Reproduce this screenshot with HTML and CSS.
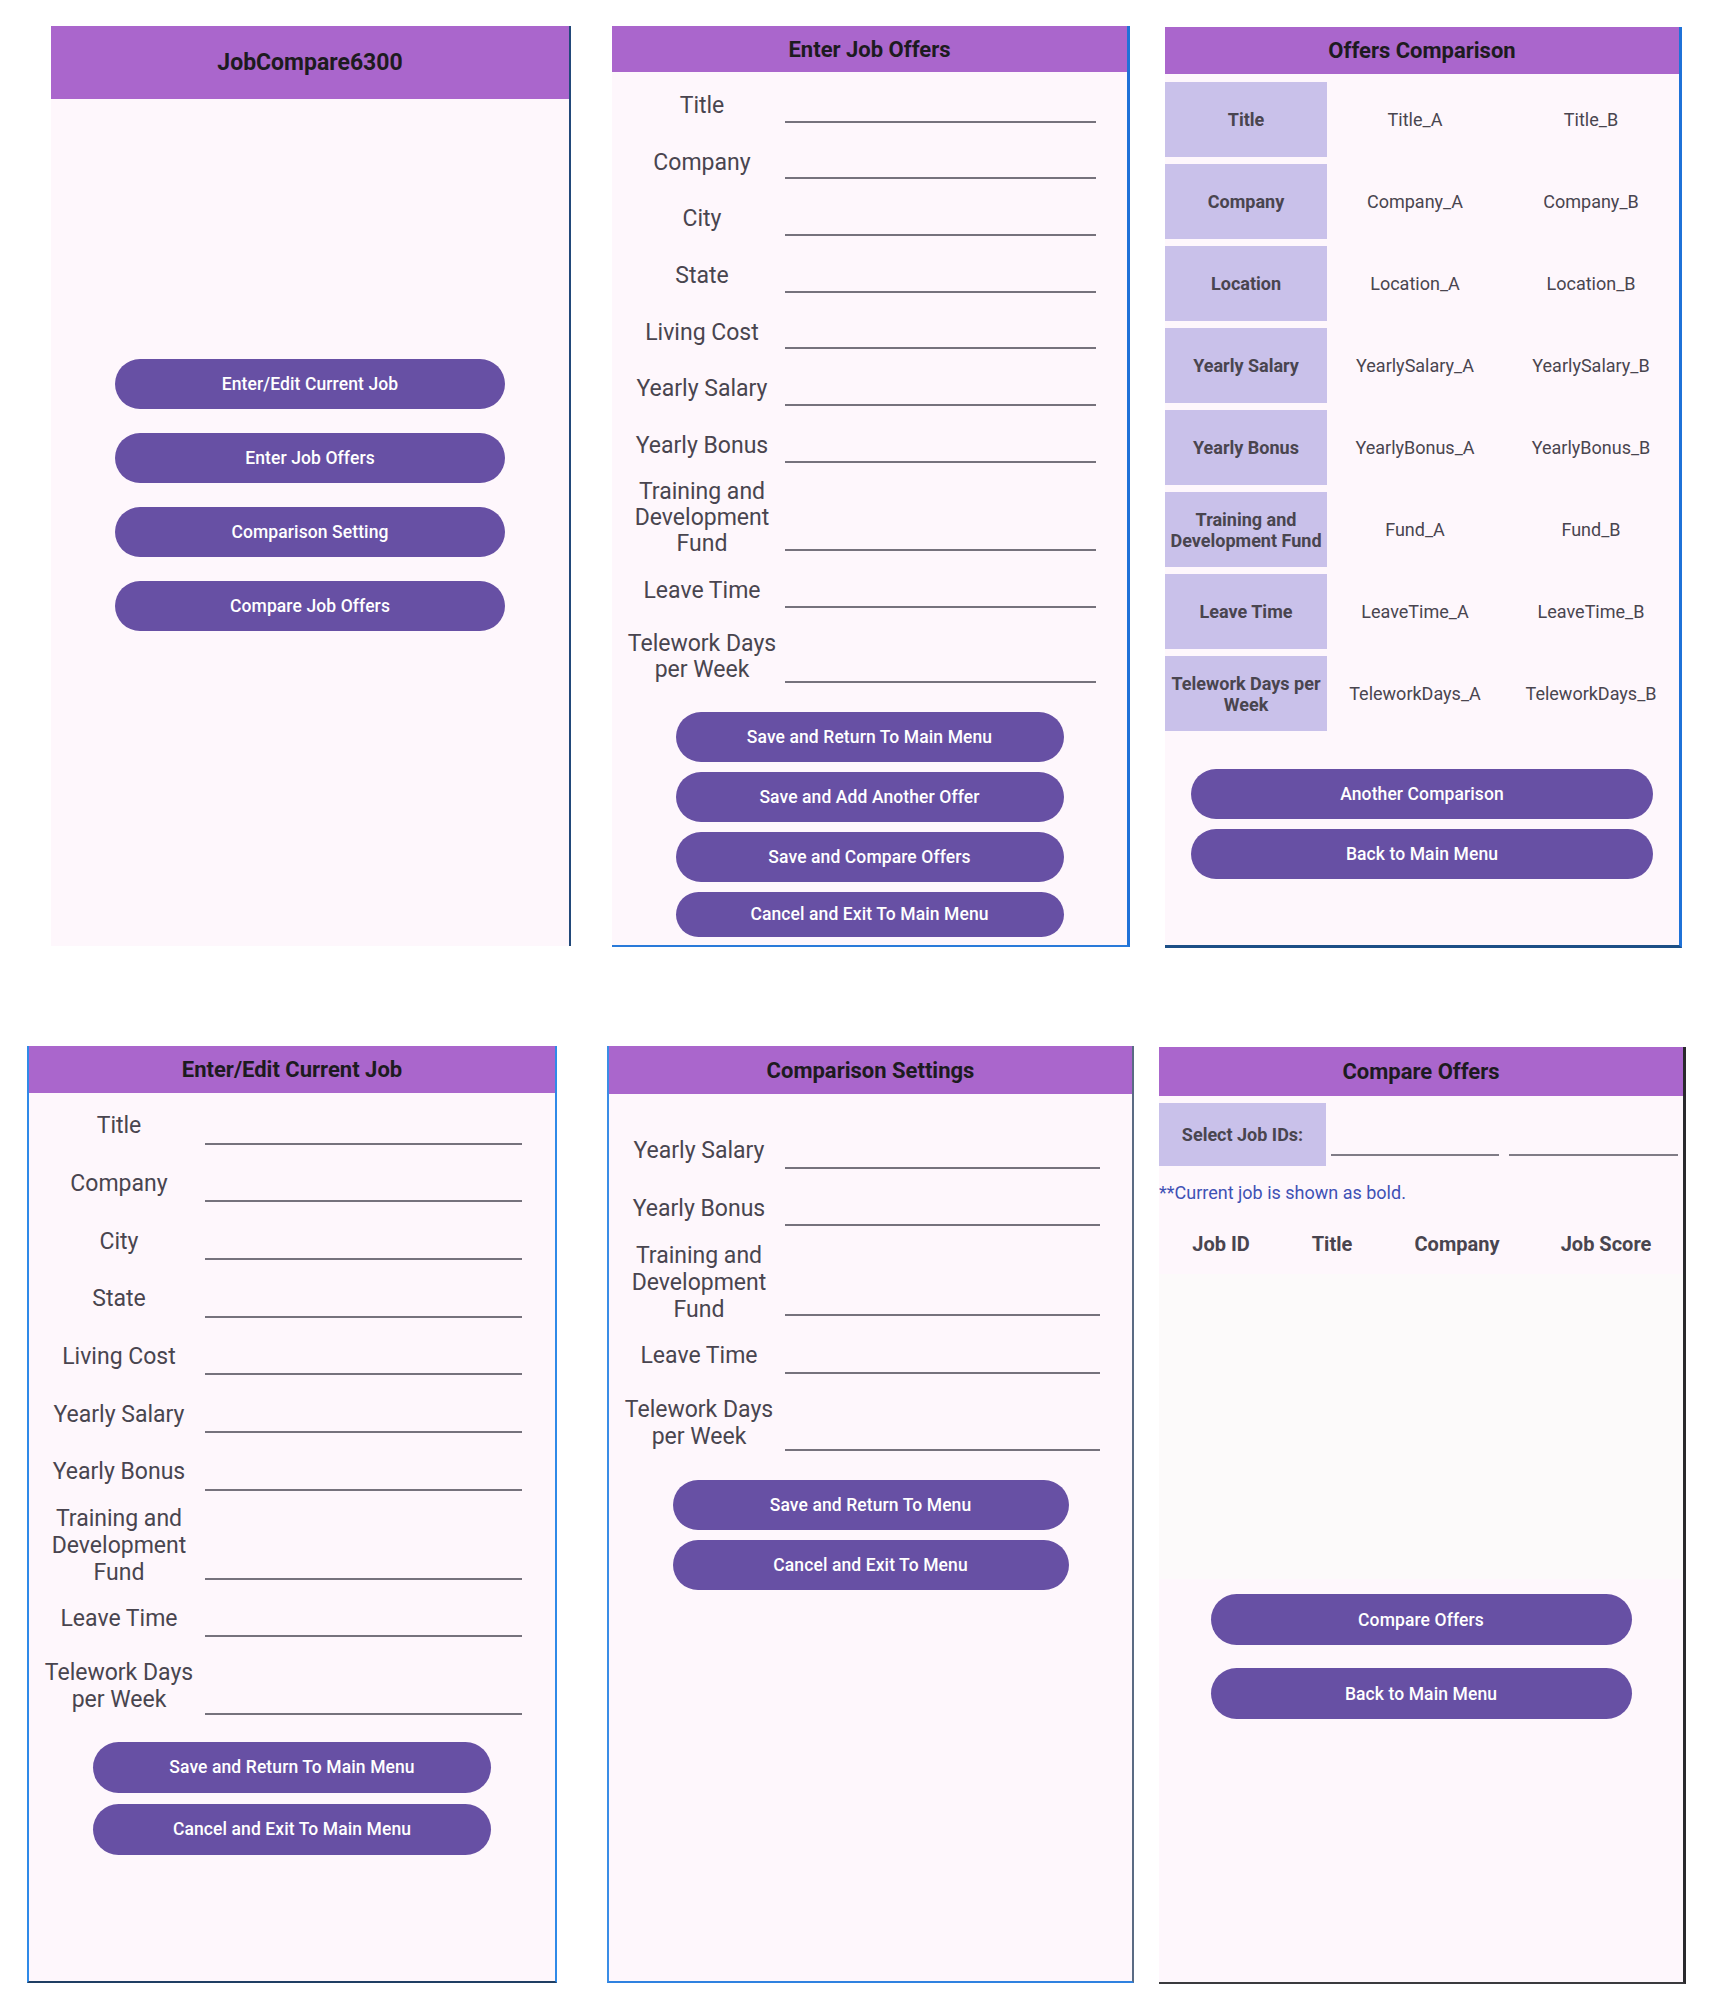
FILE: index.html
```html
<!DOCTYPE html>
<html lang="en">
<head>
<meta charset="utf-8">
<title>JobCompare6300 screens</title>
<link rel="stylesheet" href="styles.css">
</head>
<body>
<div class="page">
  <div class="row row-top">
    <!-- Main menu -->
    <section class="panel p1">
      <header class="bar bar-tall"><h1 class="bar-title big">JobCompare6300</h1></header>
      <div class="menu">
        <button class="btn btn-menu">Enter/Edit Current Job</button>
        <button class="btn btn-menu">Enter Job Offers</button>
        <button class="btn btn-menu">Comparison Setting</button>
        <button class="btn btn-menu">Compare Job Offers</button>
      </div>
    </section>

    <!-- Enter Job Offers -->
    <section class="panel p2">
      <header class="bar bar-46"><h1 class="bar-title">Enter Job Offers</h1></header>
      <div class="form form-p2">
        <div class="frow h57"><div class="flabel">Title</div><div class="ffield"></div></div>
        <div class="frow h57"><div class="flabel">Company</div><div class="ffield"></div></div>
        <div class="frow h57"><div class="flabel">City</div><div class="ffield"></div></div>
        <div class="frow h57"><div class="flabel">State</div><div class="ffield"></div></div>
        <div class="frow h57"><div class="flabel">Living Cost</div><div class="ffield"></div></div>
        <div class="frow h57"><div class="flabel">Yearly Salary</div><div class="ffield"></div></div>
        <div class="frow h57"><div class="flabel">Yearly Bonus</div><div class="ffield"></div></div>
        <div class="frow h88"><div class="flabel">Training and<br>Development<br>Fund</div><div class="ffield"></div></div>
        <div class="frow h57"><div class="flabel">Leave Time</div><div class="ffield"></div></div>
        <div class="frow h75"><div class="flabel">Telework Days<br>per Week</div><div class="ffield"></div></div>
      </div>
      <div class="actions actions-p2">
        <button class="btn">Save and Return To Main Menu</button>
        <button class="btn">Save and Add Another Offer</button>
        <button class="btn">Save and Compare Offers</button>
        <button class="btn btn-short">Cancel and Exit To Main Menu</button>
      </div>
    </section>

    <!-- Offers Comparison -->
    <section class="panel p3">
      <header class="bar bar-47"><h1 class="bar-title">Offers Comparison</h1></header>
      <div class="ctable">
        <div class="crow"><div class="chead">Title</div><div class="cval">Title_A</div><div class="cval">Title_B</div></div>
        <div class="crow"><div class="chead">Company</div><div class="cval">Company_A</div><div class="cval">Company_B</div></div>
        <div class="crow"><div class="chead">Location</div><div class="cval">Location_A</div><div class="cval">Location_B</div></div>
        <div class="crow"><div class="chead">Yearly Salary</div><div class="cval">YearlySalary_A</div><div class="cval">YearlySalary_B</div></div>
        <div class="crow"><div class="chead">Yearly Bonus</div><div class="cval">YearlyBonus_A</div><div class="cval">YearlyBonus_B</div></div>
        <div class="crow"><div class="chead">Training and<br>Development Fund</div><div class="cval">Fund_A</div><div class="cval">Fund_B</div></div>
        <div class="crow"><div class="chead">Leave Time</div><div class="cval">LeaveTime_A</div><div class="cval">LeaveTime_B</div></div>
        <div class="crow"><div class="chead">Telework Days per<br>Week</div><div class="cval">TeleworkDays_A</div><div class="cval">TeleworkDays_B</div></div>
      </div>
      <div class="actions actions-p3">
        <button class="btn">Another Comparison</button>
        <button class="btn">Back to Main Menu</button>
      </div>
    </section>
  </div>

  <div class="row row-bottom">
    <!-- Enter/Edit Current Job -->
    <section class="panel p4">
      <header class="bar bar-47"><h1 class="bar-title">Enter/Edit Current Job</h1></header>
      <div class="form form-p4">
        <div class="frow h58"><div class="flabel">Title</div><div class="ffield"></div></div>
        <div class="frow h58"><div class="flabel">Company</div><div class="ffield"></div></div>
        <div class="frow h58"><div class="flabel">City</div><div class="ffield"></div></div>
        <div class="frow h58"><div class="flabel">State</div><div class="ffield"></div></div>
        <div class="frow h58"><div class="flabel">Living Cost</div><div class="ffield"></div></div>
        <div class="frow h58"><div class="flabel">Yearly Salary</div><div class="ffield"></div></div>
        <div class="frow h58"><div class="flabel">Yearly Bonus</div><div class="ffield"></div></div>
        <div class="frow h89"><div class="flabel">Training and<br>Development<br>Fund</div><div class="ffield"></div></div>
        <div class="frow h58"><div class="flabel">Leave Time</div><div class="ffield"></div></div>
        <div class="frow h77"><div class="flabel">Telework Days<br>per Week</div><div class="ffield"></div></div>
      </div>
      <div class="actions actions-p4">
        <button class="btn">Save and Return To Main Menu</button>
        <button class="btn">Cancel and Exit To Main Menu</button>
      </div>
    </section>

    <!-- Comparison Settings -->
    <section class="panel p5">
      <header class="bar bar-48"><h1 class="bar-title">Comparison Settings</h1></header>
      <div class="form form-p5">
        <div class="frow h58"><div class="flabel">Yearly Salary</div><div class="ffield"></div></div>
        <div class="frow h58"><div class="flabel">Yearly Bonus</div><div class="ffield"></div></div>
        <div class="frow h90"><div class="flabel">Training and<br>Development<br>Fund</div><div class="ffield"></div></div>
        <div class="frow h58"><div class="flabel">Leave Time</div><div class="ffield"></div></div>
        <div class="frow h77"><div class="flabel">Telework Days<br>per Week</div><div class="ffield"></div></div>
      </div>
      <div class="actions actions-p5">
        <button class="btn">Save and Return To Menu</button>
        <button class="btn">Cancel and Exit To Menu</button>
      </div>
    </section>

    <!-- Compare Offers -->
    <section class="panel p6">
      <header class="bar bar-49"><h1 class="bar-title">Compare Offers</h1></header>
      <div class="select-row">
        <div class="select-label">Select Job IDs:</div>
        <div class="sfield sfield-a"></div>
        <div class="sfield sfield-b"></div>
      </div>
      <p class="note">**Current job is shown as bold.</p>
      <div class="list-head">
        <div>Job ID</div><div>Title</div><div>Company</div><div>Job Score</div>
      </div>
      <div class="list-body"></div>
      <div class="actions actions-p6">
        <button class="btn">Compare Offers</button>
        <button class="btn">Back to Main Menu</button>
      </div>
    </section>
  </div>
</div>
</body>
</html>
```

FILE: styles.css
```css
* { box-sizing: border-box; }

html, body {
  margin: 0;
  padding: 0;
  background: #ffffff;
}

body {
  font-family: Roboto, "Noto Sans", "Liberation Sans", sans-serif;
  color: #49454f;
}

.page {
  padding-top: 26px;
}

.row {
  display: flex;
  align-items: flex-start;
}

.row-top { padding-left: 51px; }
.row-bottom { padding-left: 27px; margin-top: 98px; }

/* ---------- panels ---------- */
.panel {
  background: #fef7fc;
  flex: none;
  overflow: hidden;
}

.p1 {
  width: 520px;
  height: 920px;
  border-right: 2px solid #22497a;
}

.p2 {
  width: 518px;
  height: 921px;
  margin-left: 41px;
  border-right: 3px solid #1f72d8;
  border-bottom: 2px solid #2a7ad9;
}

.p3 {
  width: 517px;
  height: 921px;
  margin-left: 35px;
  margin-top: 1px;
  border-right: 3px solid #1f72d8;
  border-bottom: 3px solid #1d4f86;
}

.p4 {
  width: 530px;
  height: 937px;
  border-left: 2px solid #2f8ae8;
  border-right: 2px solid #2f8ae8;
  border-bottom: 2px solid #1f3e63;
}

.p5 {
  width: 527px;
  height: 937px;
  margin-left: 50px;
  border-left: 2px solid #3a8de6;
  border-right: 2px solid #5a6b84;
  border-bottom: 2px solid #2f82e0;
}

.p6 {
  width: 527px;
  height: 937px;
  margin-left: 25px;
  margin-top: 1px;
  border-right: 3px solid #2a2a2d;
  border-bottom: 2px solid #3a3a3e;
}

/* ---------- title bar ---------- */
.bar {
  background: #aa66cc;
  display: flex;
  align-items: center;
  justify-content: center;
}

.bar-tall { height: 73px; }
.bar-46 { height: 46px; }
.bar-47 { height: 47px; }
.bar-48 { height: 48px; }
.bar-49 { height: 49px; }

.bar-title {
  margin: 0;
  font-size: 22px;
  font-weight: 700;
  color: #1d1b20;
  letter-spacing: 0;
}

.bar-title.big { font-size: 23px; }

/* ---------- buttons ---------- */
.btn {
  display: block;
  margin: 0 auto;
  border: none;
  border-radius: 999px;
  background: #6750a4;
  color: #ffffff;
  font-family: Roboto, "Noto Sans", "Liberation Sans", sans-serif;
  font-size: 17.5px;
  font-weight: 500;
  letter-spacing: 0.1px;
  padding: 0;
  cursor: pointer;
}

.menu {
  padding-top: 260px;
  display: flex;
  flex-direction: column;
  gap: 24px;
}

.btn-menu {
  width: 390px;
  height: 50px;
}

.actions {
  display: flex;
  flex-direction: column;
}

.actions-p2 { margin-top: 20px; gap: 10px; }
.actions-p2 .btn { width: 388px; height: 50px; }
.actions-p2 .btn-short { height: 45px; }

.actions-p3 { margin-top: 38px; gap: 10px; }
.actions-p3 .btn { width: 462px; height: 50px; }

.actions-p4 { margin-top: 17px; gap: 11px; }
.actions-p4 .btn { width: 398px; height: 51px; }

.actions-p5 { margin-top: 19px; gap: 10px; }
.actions-p5 .btn { width: 396px; height: 50px; }

.actions-p6 { margin-top: 15px; gap: 23px; }
.actions-p6 .btn { width: 421px; height: 51px; }

/* ---------- forms ---------- */
.form { display: flex; flex-direction: column; }
.form-p2 { padding-top: 3px; }
.form-p4 { padding-top: 4px; }
.form-p5 { padding-top: 27px; }

.frow {
  display: flex;
  align-items: center;
}

.h57 { height: 56.7px; }
.h58 { height: 57.7px; }
.h75 { height: 75px; }
.h77 { height: 77.3px; }
.h88 { height: 88px; }
.h89 { height: 88.9px; }
.h90 { height: 89.7px; }

.flabel {
  flex: none;
  width: 160px;
  margin-left: 10px;
  text-align: center;
  font-size: 23px;
  line-height: 27px;
  color: #49454f;
}

.form-p2 .flabel {
  line-height: 26px;
  padding-top: 5px;
}

.form-p5 .flabel {
  padding-top: 2px;
}

.ffield {
  flex: none;
  align-self: flex-end;
  margin-bottom: 10px;
  height: 2px;
  background: #76727c;
}

.form-p2 .ffield { margin-left: 3px; width: 311px; margin-bottom: 9px; }
.form-p4 .ffield { margin-left: 6px; width: 317px; }
.form-p5 .ffield { margin-left: 6px; width: 315px; }

/* ---------- comparison table ---------- */
.ctable {
  margin-top: 8px;
  display: flex;
  flex-direction: column;
  gap: 7px;
}

.crow {
  display: flex;
  height: 75px;
}

.chead {
  flex: none;
  width: 162px;
  background: #c9c1ea;
  display: flex;
  align-items: center;
  justify-content: center;
  text-align: center;
  font-size: 18px;
  font-weight: 700;
  line-height: 21px;
  color: #49454f;
}

.cval {
  flex: 1;
  display: flex;
  align-items: center;
  justify-content: center;
  font-size: 18px;
  color: #49454f;
}

/* ---------- compare offers ---------- */
.select-row {
  margin-top: 7px;
  display: flex;
  height: 63px;
}

.select-label {
  flex: none;
  width: 167px;
  background: #c9c1ea;
  display: flex;
  align-items: center;
  justify-content: center;
  font-size: 18px;
  font-weight: 700;
  color: #49454f;
}

.sfield {
  flex: none;
  align-self: flex-end;
  margin-bottom: 10px;
  height: 2px;
  background: #807c86;
}

.sfield-a { margin-left: 5px; width: 168px; }
.sfield-b { margin-left: 10px; width: 169px; }

.note {
  margin: 16px 0 0 0;
  font-size: 18px;
  line-height: 22px;
  color: #3f51b5;
}

.list-head {
  margin-top: 27px;
  display: grid;
  grid-template-columns: 124px 98px 152px 146px;
  line-height: 26px;
  font-size: 20px;
  font-weight: 700;
  color: #49454f;
  text-align: center;
}

.list-body {
  margin-top: 17px;
  height: 305px;
  background: #fcfafa;
}
```
